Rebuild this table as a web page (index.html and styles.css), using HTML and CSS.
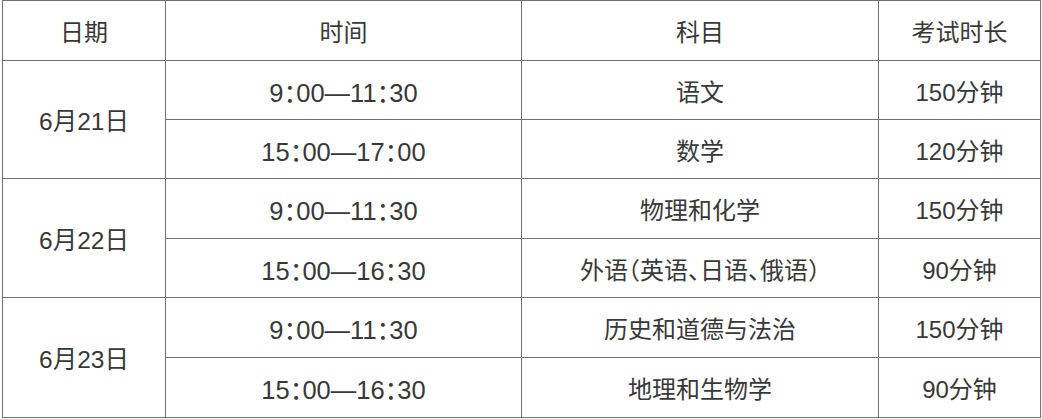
FILE: index.html
```html
<!DOCTYPE html>
<html lang="zh-CN">
<head>
<meta charset="utf-8">
<link rel="stylesheet" href="styles.css">
<title>考试时间安排</title>
</head>
<body>
<table class="schedule">
  <colgroup>
    <col class="c-date">
    <col class="c-time">
    <col class="c-subject">
    <col class="c-duration">
  </colgroup>
  <thead>
    <tr class="head-row">
      <th>日期</th>
      <th>时间</th>
      <th>科目</th>
      <th>考试时长</th>
    </tr>
  </thead>
  <tbody>
    <tr>
      <td rowspan="2" class="date">6月21日</td>
      <td class="time">9：00—11：30</td>
      <td>语文</td>
      <td>150分钟</td>
    </tr>
    <tr>
      <td class="time">15：00—17：00</td>
      <td>数学</td>
      <td>120分钟</td>
    </tr>
    <tr class="tall">
      <td rowspan="2" class="date">6月22日</td>
      <td class="time">9：00—11：30</td>
      <td>物理和化学</td>
      <td>150分钟</td>
    </tr>
    <tr>
      <td class="time">15：00—16：30</td>
      <td>外语（英语、日语、俄语）</td>
      <td>90分钟</td>
    </tr>
    <tr class="tall">
      <td rowspan="2" class="date">6月23日</td>
      <td class="time">9：00—11：30</td>
      <td>历史和道德与法治</td>
      <td>150分钟</td>
    </tr>
    <tr class="tall">
      <td class="time">15：00—16：30</td>
      <td>地理和生物学</td>
      <td>90分钟</td>
    </tr>
  </tbody>
</table>
</body>
</html>
```
FILE: styles.css
```css
html, body {
  margin: 0;
  padding: 0;
  background: #ffffff;
}

.schedule {
  margin: 0 0 0 2px;
  border-collapse: collapse;
  table-layout: fixed;
  width: 1038px;
  font-family: "Liberation Sans", "Noto Sans CJK SC", sans-serif;
  font-feature-settings: "halt";
  font-size: 24px;
  color: #383838;
}

.c-date { width: 163px; }
.c-time { width: 356px; }
.c-subject { width: 357px; }
.c-duration { width: 162px; }

.schedule th,
.schedule td {
  border: 1px solid #727272;
  padding: 0;
  text-align: center;
  vertical-align: middle;
  font-weight: normal;
  height: 58px;
  white-space: nowrap;
}

.schedule .head-row th {
  height: 59px;
}

.schedule .tall td {
  height: 59px;
}

.schedule .time {
  font-size: 25.5px;
}

.schedule .date {
  font-size: 24.5px;
}
```
